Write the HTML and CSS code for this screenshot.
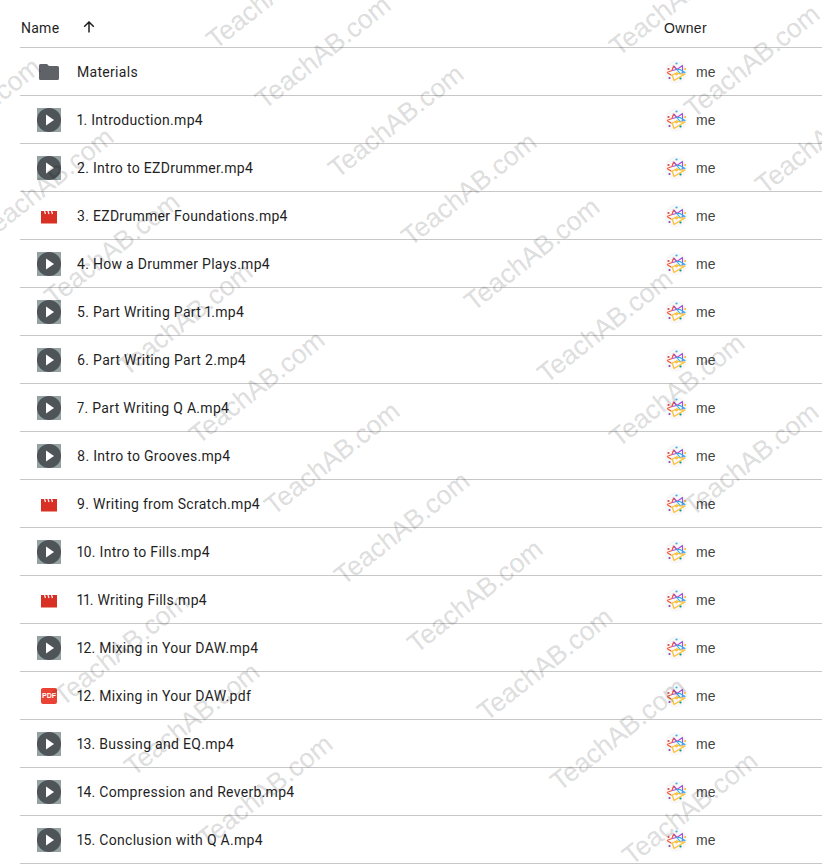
FILE: index.html
```html
<!DOCTYPE html>
<html lang="en">
<head>
    <meta charset="UTF-8">
    <title>Drive file list</title>
    <link rel="stylesheet" href="styles.css">
</head>
<body>

<!-- shared icons -->
<svg class="sprites" width="0" height="0">
    <symbol id="i-folder" viewBox="0 0 24 24">
        <path d="M4 4h6l2 2h8.500a1.500 1.500 0 0 1 1.500 1.500v11a1.500 1.500 0 0 1-1.500 1.500h-17a1.500 1.500 0 0 1-1.500-1.500v-13a1.500 1.500 0 0 1 1.500-1.500z" fill="#5f6368"/>
    </symbol>
    <symbol id="i-video" viewBox="0 0 24 24">
        <rect width="24" height="24" fill="#93a3a4"/>
        <circle cx="12" cy="12" r="12" fill="#4e5458"/>
        <path d="M9 6.500l8 5.500-8 5.500z" fill="#fff"/>
    </symbol>
    <symbol id="i-film" viewBox="0 0 24 24">
        <rect x="4" y="7" width="16" height="12.500" fill="#d93025"/>
        <path d="M7.500 7l1 3M11 7l1 3M14.500 7l1 3" stroke="#fff" stroke-width="1.200"/>
    </symbol>
    <symbol id="i-star" viewBox="0 0 24 24">
        <circle cx="12" cy="12" r="11.500" fill="#f8f8f9"/>
        <g fill="none" stroke-width="1.200" stroke-linejoin="round">
            <path d="M3 12.500l5-2 1.500-4.500 3.500 3.500M3 12.500l4 2.500" stroke="#f4593c"/>
            <path d="M9.500 6l3.500 3.500 5.500-4v7.500M8 10.500l5-1" stroke="#a45ad0"/>
            <path d="M13 9.500l3 4 5-1-5-3z" stroke="#35aef0"/>
            <path d="M7 15l1.500 1 1.500 4.500 11-6.500-5 0-3-1-5 2" stroke="#fbc02d"/>
        </g>
        <circle cx="12.500" cy="3.500" r="1.100" fill="#35aef0"/>
        <circle cx="4.500" cy="9" r="1.100" fill="#ea4335"/>
        <circle cx="21" cy="9" r="1.100" fill="#fbc02d"/>
        <circle cx="5.500" cy="18" r="1.100" fill="#8e3cc4"/>
        <circle cx="16.500" cy="18.500" r="1.100" fill="#0d9488"/>
        <circle cx="12.500" cy="14" r="1.400" fill="#fbc02d"/>
    </symbol>
</svg>

<div class="file-list">
    <div class="row head">
        <div class="name-head">Name
            <svg class="sort-arrow" viewBox="0 0 12 12"><path d="M6 11.500V1M1.200 5.800L6 1l4.800 4.800" fill="none" stroke="#1f1f1f" stroke-width="1.500"/></svg>
        </div>
        <div class="owner-head">Owner</div>
    </div>

    <div class="row"><svg class="file-icon"><use href="#i-folder"/></svg><div class="file-name">Materials</div><div class="owner"><svg class="avatar"><use href="#i-star"/></svg>me</div></div>
    <div class="row"><svg class="file-icon"><use href="#i-video"/></svg><div class="file-name">1. Introduction.mp4</div><div class="owner"><svg class="avatar"><use href="#i-star"/></svg>me</div></div>
    <div class="row"><svg class="file-icon"><use href="#i-video"/></svg><div class="file-name">2. Intro to EZDrummer.mp4</div><div class="owner"><svg class="avatar"><use href="#i-star"/></svg>me</div></div>
    <div class="row"><svg class="file-icon"><use href="#i-film"/></svg><div class="file-name">3. EZDrummer Foundations.mp4</div><div class="owner"><svg class="avatar"><use href="#i-star"/></svg>me</div></div>
    <div class="row"><svg class="file-icon"><use href="#i-video"/></svg><div class="file-name">4. How a Drummer Plays.mp4</div><div class="owner"><svg class="avatar"><use href="#i-star"/></svg>me</div></div>
    <div class="row"><svg class="file-icon"><use href="#i-video"/></svg><div class="file-name">5. Part Writing Part 1.mp4</div><div class="owner"><svg class="avatar"><use href="#i-star"/></svg>me</div></div>
    <div class="row"><svg class="file-icon"><use href="#i-video"/></svg><div class="file-name">6. Part Writing Part 2.mp4</div><div class="owner"><svg class="avatar"><use href="#i-star"/></svg>me</div></div>
    <div class="row"><svg class="file-icon"><use href="#i-video"/></svg><div class="file-name">7. Part Writing Q A.mp4</div><div class="owner"><svg class="avatar"><use href="#i-star"/></svg>me</div></div>
    <div class="row"><svg class="file-icon"><use href="#i-video"/></svg><div class="file-name">8. Intro to Grooves.mp4</div><div class="owner"><svg class="avatar"><use href="#i-star"/></svg>me</div></div>
    <div class="row"><svg class="file-icon"><use href="#i-film"/></svg><div class="file-name">9. Writing from Scratch.mp4</div><div class="owner"><svg class="avatar"><use href="#i-star"/></svg>me</div></div>
    <div class="row"><svg class="file-icon"><use href="#i-video"/></svg><div class="file-name">10. Intro to Fills.mp4</div><div class="owner"><svg class="avatar"><use href="#i-star"/></svg>me</div></div>
    <div class="row"><svg class="file-icon"><use href="#i-film"/></svg><div class="file-name">11. Writing Fills.mp4</div><div class="owner"><svg class="avatar"><use href="#i-star"/></svg>me</div></div>
    <div class="row"><svg class="file-icon"><use href="#i-video"/></svg><div class="file-name">12. Mixing in Your DAW.mp4</div><div class="owner"><svg class="avatar"><use href="#i-star"/></svg>me</div></div>
    <div class="row"><div class="file-icon pdf-cell"><span class="pdf-icon">PDF</span></div><div class="file-name">12. Mixing in Your DAW.pdf</div><div class="owner"><svg class="avatar"><use href="#i-star"/></svg>me</div></div>
    <div class="row"><svg class="file-icon"><use href="#i-video"/></svg><div class="file-name">13. Bussing and EQ.mp4</div><div class="owner"><svg class="avatar"><use href="#i-star"/></svg>me</div></div>
    <div class="row"><svg class="file-icon"><use href="#i-video"/></svg><div class="file-name">14. Compression and Reverb.mp4</div><div class="owner"><svg class="avatar"><use href="#i-star"/></svg>me</div></div>
    <div class="row"><svg class="file-icon"><use href="#i-video"/></svg><div class="file-name">15. Conclusion with Q A.mp4</div><div class="owner"><svg class="avatar"><use href="#i-star"/></svg>me</div></div>
</div>

<!-- watermark stamps, left/top is the foot of the T -->
<div class="stamps">
    <span class="stamp" style="left:205px;top:43px">TeachAB.com</span>
    <span class="stamp" style="left:254px;top:103px">TeachAB.com</span>
    <span class="stamp" style="left:327px;top:172px">TeachAB.com</span>
    <span class="stamp" style="left:400px;top:240px">TeachAB.com</span>
    <span class="stamp" style="left:463px;top:305px">TeachAB.com</span>
    <span class="stamp" style="left:536px;top:377px">TeachAB.com</span>
    <span class="stamp" style="left:608px;top:441px">TeachAB.com</span>
    <span class="stamp" style="left:682px;top:510px">TeachAB.com</span>
    <span class="stamp" style="left:608px;top:50px">TeachAB.com</span>
    <span class="stamp" style="left:683px;top:112px">TeachAB.com</span>
    <span class="stamp" style="left:754px;top:188px">TeachAB.com</span>
    <span class="stamp" style="left:-96px;top:165px">TeachAB.com</span>
    <span class="stamp" style="left:-23px;top:235px">TeachAB.com</span>
    <span class="stamp" style="left:43px;top:300px">TeachAB.com</span>
    <span class="stamp" style="left:116px;top:370px">TeachAB.com</span>
    <span class="stamp" style="left:188px;top:438px">TeachAB.com</span>
    <span class="stamp" style="left:263px;top:509px">TeachAB.com</span>
    <span class="stamp" style="left:333px;top:579px">TeachAB.com</span>
    <span class="stamp" style="left:406px;top:647px">TeachAB.com</span>
    <span class="stamp" style="left:476px;top:715px">TeachAB.com</span>
    <span class="stamp" style="left:549px;top:785px">TeachAB.com</span>
    <span class="stamp" style="left:621px;top:859px">TeachAB.com</span>
    <span class="stamp" style="left:52px;top:700px">TeachAB.com</span>
    <span class="stamp" style="left:123px;top:770px">TeachAB.com</span>
    <span class="stamp" style="left:196px;top:842px">TeachAB.com</span>
</div>

</body>
</html>
```

FILE: styles.css
```css
html, body {
    height: 864px;
    overflow: hidden;
}
body {
    margin: 0;
    position: relative;
    background-color: #fff;
    color: #1f1f1f;
    font-family: Roboto, Arial, sans-serif;
    font-size: 14px;
}
.sprites {
    position: absolute;
}
.file-list {
    margin-left: 20px;
}
.row {
    display: grid;
    grid-template-columns: 57px 587px 1fr;
    align-items: center;
    height: 47px;
    border-bottom: 1px solid #c7c7c7;
}
.row.head {
    grid-template-columns: 644px 1fr;
    height: 39px;
    padding-top: 8px;
}
.name-head {
    display: flex;
    align-items: center;
    gap: 24px;
    padding-left: 1px;
    letter-spacing: .25px;
}
.sort-arrow {
    width: 12px;
    height: 12px;
    margin-top: -2px;
}
.owner-head {
    font-family: "Liberation Sans", Arial, sans-serif;
    letter-spacing: .35px;
}
.file-icon {
    width: 24px;
    height: 24px;
    margin-left: 17px;
}
.pdf-cell {
    display: flex;
    align-items: center;
    justify-content: center;
}
.pdf-icon {
    width: 16px;
    height: 16px;
    border-radius: 2px;
    background-color: #ea4335;
    color: #fff;
    font-family: "Liberation Sans", Arial, sans-serif;
    font-size: 7px;
    font-weight: bold;
    line-height: 16px;
    text-align: center;
}
.file-name {
    font-variant-numeric: proportional-nums;
    letter-spacing: .3px;
    white-space: nowrap;
}
.owner {
    display: flex;
    align-items: center;
    gap: 8px;
    color: #444746;
    font-family: "Liberation Sans", Arial, sans-serif;
}
.avatar {
    width: 24px;
    height: 24px;
}
.stamps {
    position: absolute;
    top: 0;
    left: 0;
    width: 822px;
    height: 864px;
    overflow: hidden;
    pointer-events: none;
}
.stamp {
    position: absolute;
    height: 0;
    margin-left: 5px;
    line-height: 0;
    color: rgba(0, 0, 0, .13);
    font-family: "Liberation Sans", Arial, sans-serif;
    font-size: 26.500px;
    white-space: nowrap;
    -webkit-text-stroke: .4px rgba(0, 0, 0, .13);
    transform: rotate(-38.500deg);
    transform-origin: 0 0;
}
```
